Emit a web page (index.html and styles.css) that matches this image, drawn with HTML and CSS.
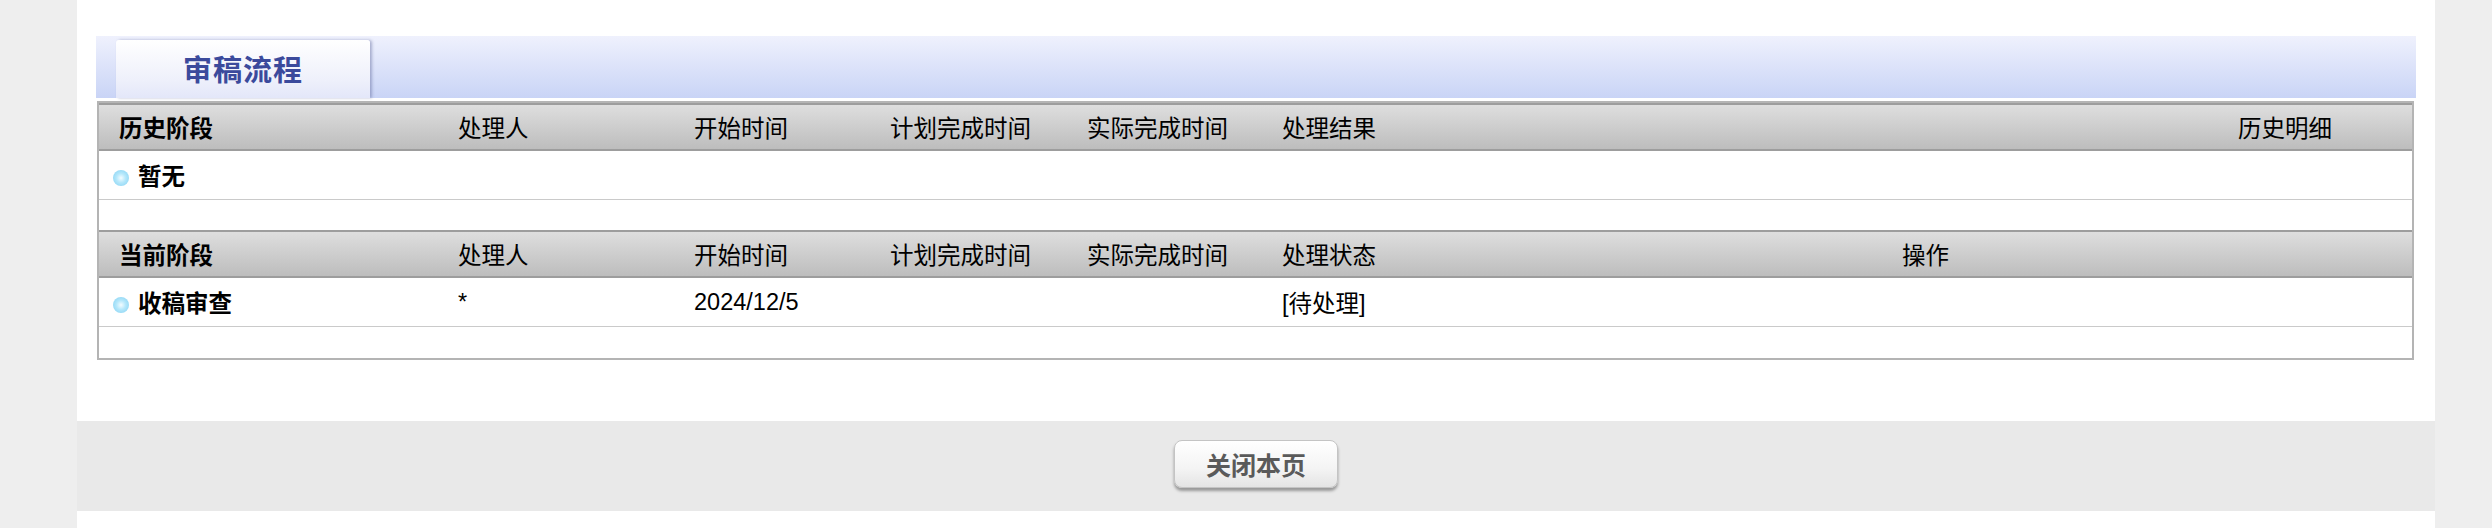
FILE: index.html
```html
<!DOCTYPE html>
<html lang="zh-CN">
<head>
    <meta charset="UTF-8">
    <title>审稿流程</title>
    <link rel="stylesheet" href="styles.css">
</head>
<body>
    <div class="page">
        <div class="content">
            <div class="tabbar">
                <div class="tab">审稿流程</div>
            </div>
            <div class="flow-box">
                <table class="flow">
                    <colgroup>
                        <col style="width: 359px">
                        <col style="width: 236px">
                        <col style="width: 196px">
                        <col style="width: 197px">
                        <col style="width: 195px">
                        <col style="width: 620px">
                        <col style="width: 336px">
                        <col style="width: 174px">
                    </colgroup>
                    <tr class="head">
                        <th class="stage">历史阶段</th>
                        <th>处理人</th>
                        <th>开始时间</th>
                        <th>计划完成时间</th>
                        <th>实际完成时间</th>
                        <th colspan="2">处理结果</th>
                        <th>历史明细</th>
                    </tr>
                    <tr class="item">
                        <td class="stage"><span class="dot"></span>暂无</td>
                        <td></td><td></td><td></td><td></td>
                        <td colspan="2"></td><td></td>
                    </tr>
                    <tr class="blank"><td colspan="8"></td></tr>
                    <tr class="head">
                        <th class="stage">当前阶段</th>
                        <th>处理人</th>
                        <th>开始时间</th>
                        <th>计划完成时间</th>
                        <th>实际完成时间</th>
                        <th>处理状态</th>
                        <th colspan="2">操作</th>
                    </tr>
                    <tr class="item">
                        <td class="stage"><span class="dot"></span>收稿审查</td>
                        <td>*</td>
                        <td>2024/12/5</td>
                        <td></td>
                        <td></td>
                        <td>[待处理]</td>
                        <td colspan="2"></td>
                    </tr>
                    <tr class="blank"><td colspan="8"></td></tr>
                </table>
            </div>
        </div>
        <div class="footer">
            <button class="btn-close" onclick="window.close()">关闭本页</button>
        </div>
    </div>
</body>
</html>
```

FILE: styles.css
```css
body {
    margin: 0;
    padding: 0;
    background-color: #eeeeee;
    font-family: "Liberation Sans", Arial, "Noto Sans CJK SC", sans-serif;
    font-size: 23.5px;
    color: #000;
}

.page {
    width: 2358px;
    margin-left: 77px;
    background-color: #fff;
    padding-bottom: 17px;
}

.content {
    padding: 36px 19px 61px 19px;
}

/* tab bar */
.tabbar {
    height: 62px;
    background: linear-gradient(to bottom, #eff1fd, #c9d4f6);
    padding-left: 20px;
    display: flex;
    align-items: flex-end;
    margin-bottom: 3px;
}

.tab {
    width: 254px;
    height: 58px;
    box-sizing: border-box;
    background: linear-gradient(to bottom, #ffffff, #eef0fb 70%, #e3e7f9);
    border-radius: 3px 3px 0 0;
    box-shadow: 2px 0 3px rgba(90, 100, 150, 0.45);
    color: #3b4a9c;
    font-family: "Noto Sans CJK SC", sans-serif;
    font-weight: bold;
    font-size: 29px;
    letter-spacing: 1px;
    text-align: center;
    line-height: 56px;
}

/* flow table */
.flow-box {
    margin: 0 2px 0 1px;
    border: 2px solid #b4b4b4;
}

.flow {
    width: 100%;
    table-layout: fixed;
    border-collapse: collapse;
}

.flow th,
.flow td {
    padding: 0;
    text-align: left;
    white-space: nowrap;
}

.flow th {
    height: 44px;
    font-weight: normal;
    background: linear-gradient(to bottom, #dedede, #bdbdbd);
    border-top: 2px solid #9d9d9d;
    border-bottom: 2px solid #9d9d9d;
}

.flow th.stage {
    font-weight: bold;
    padding-left: 20px;
}

.flow .item td {
    height: 48px;
    border-bottom: 1px solid #cacaca;
}

.flow td.stage {
    font-weight: bold;
    padding-left: 14px;
}

.flow .blank td {
    height: 30px;
}

.flow tr:last-child td {
    height: 31px;
}

.dot {
    display: inline-block;
    width: 16px;
    height: 16px;
    border-radius: 50%;
    background: radial-gradient(circle at 50% 50%, #f4fcff 0, #b6e8fb 40%, #7fcff2 100%);
    vertical-align: -1px;
    margin-right: 9px;
}

/* footer */
.footer {
    background-color: #e9e9e9;
    height: 90px;
    display: flex;
    justify-content: center;
    align-items: center;
}

.btn-close {
    width: 164px;
    height: 48px;
    margin-bottom: 4px;
    border: 1px solid #c4c4c4;
    border-radius: 8px;
    background: linear-gradient(to bottom, #ffffff, #f4f4f4 60%, #e4e4e4);
    box-shadow: 0 3px 3px rgba(0, 0, 0, 0.35);
    color: #5a5a5a;
    font-family: "Noto Sans CJK SC", sans-serif;
    font-weight: bold;
    font-size: 25px;
    cursor: pointer;
}
```
